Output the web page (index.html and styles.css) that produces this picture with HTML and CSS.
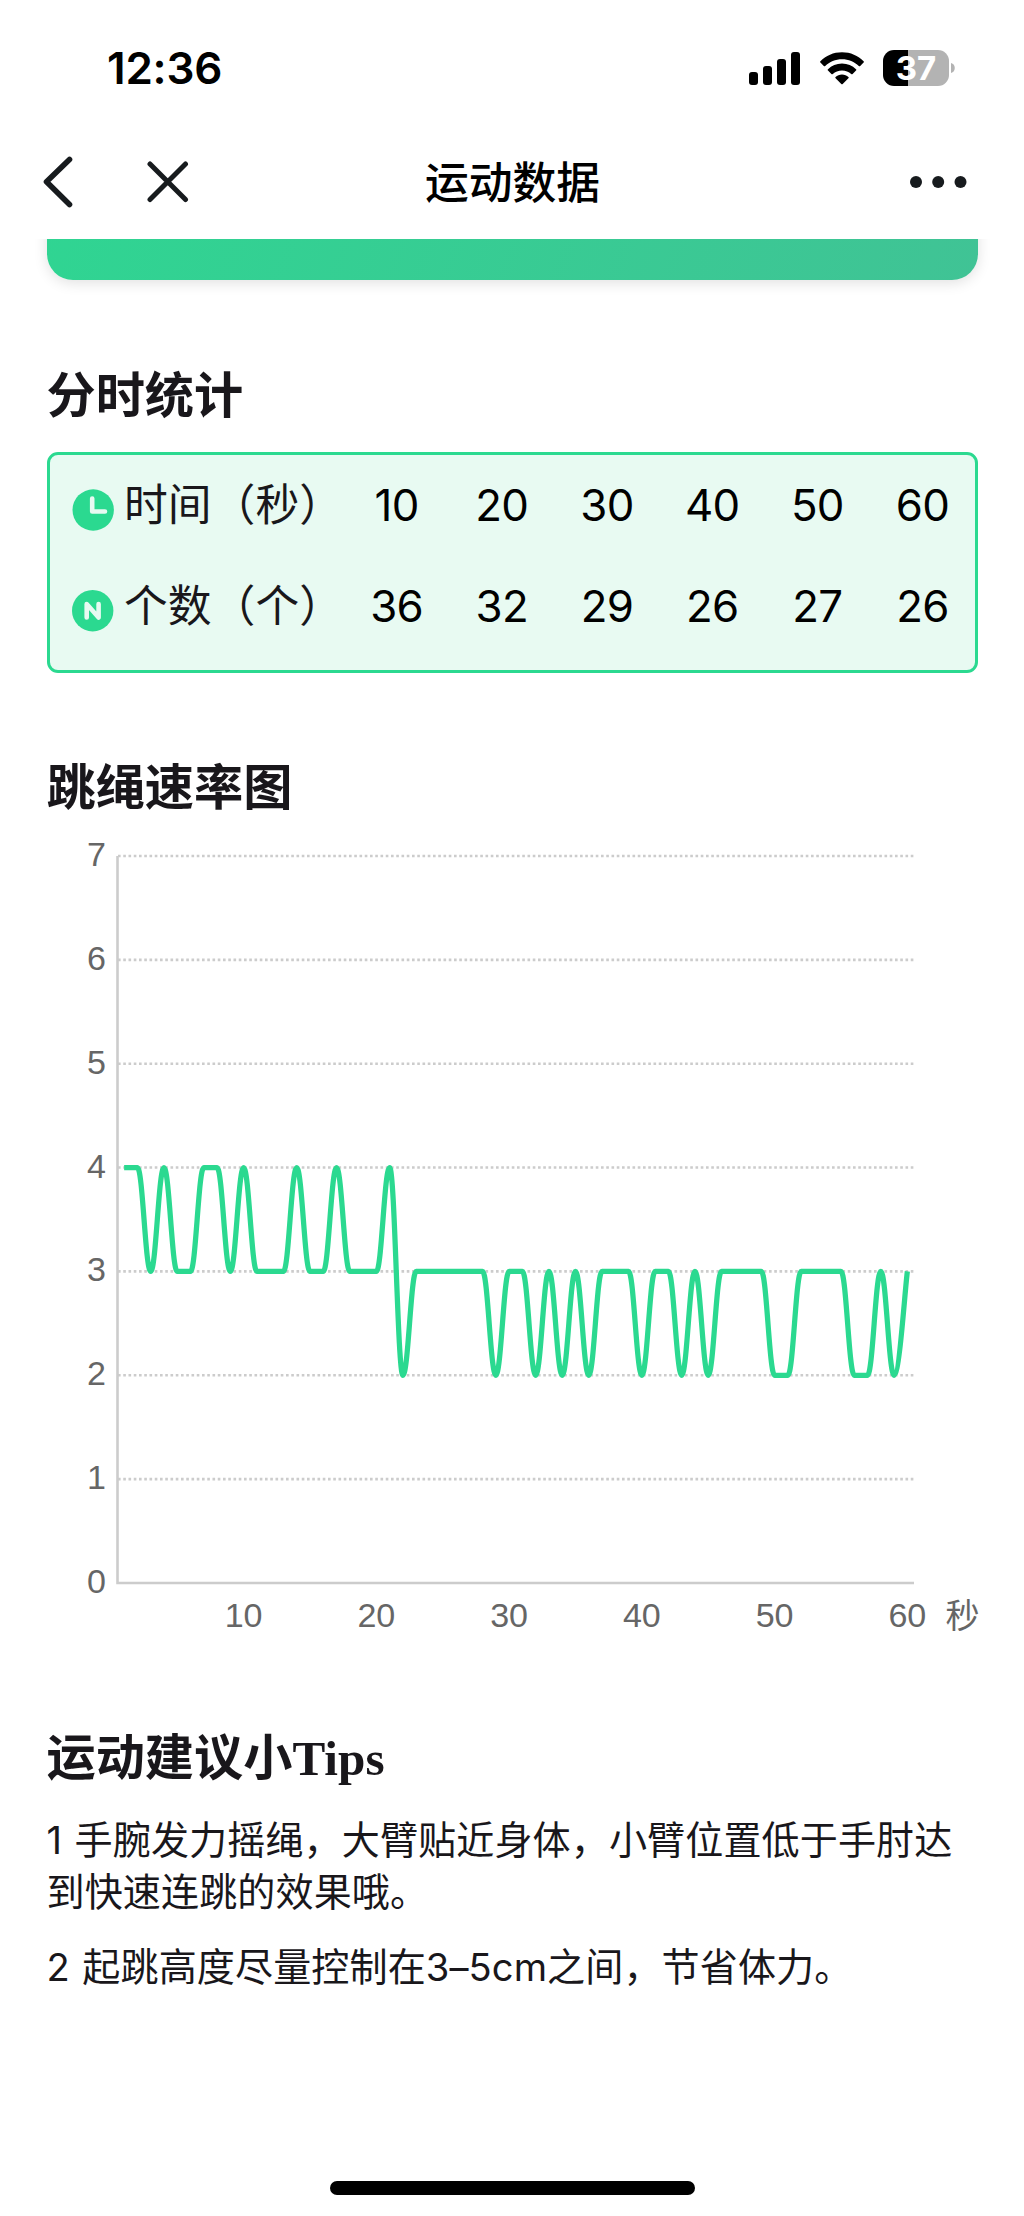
FILE: index.html
```html
<!DOCTYPE html>
<html lang="zh-CN">
<head>
<meta charset="utf-8">
<meta name="viewport" content="width=device-width, initial-scale=1">
<title>运动数据</title>
<link rel="stylesheet" href="styles.css">
</head>
<body>
<header class="top">
  <div class="status">
    <span class="clock">12:36</span>
    <div class="indicators">
      <svg class="signal" width="51" height="33" viewBox="0 0 51 33"><rect x="0" y="20" width="9" height="13" rx="3"/><rect x="14" y="14" width="9" height="19" rx="3"/><rect x="28" y="7" width="9" height="26" rx="3"/><rect x="42" y="0" width="9" height="33" rx="3"/></svg>
      <svg class="wifi" width="44" height="33" viewBox="0 0 44 33"><path d="M22 0.3C30.5 0.3 38.200 3.700 43.600 9.200Q44.200 9.900 43.600 10.600L40.200 13.900Q39.500 14.500 38.800 13.900C34.500 9.800 28.500 7.200 22 7.200S9.500 9.800 5.200 13.900Q4.500 14.500 3.800 13.900L0.400 10.600Q-0.200 9.900 0.400 9.200C5.800 3.700 13.500 0.300 22 0.300ZM22 11.500C27.500 11.500 32.400 13.700 36 17.200Q36.700 17.900 36 18.600L32.600 21.900Q31.900 22.500 31.200 21.900C28.800 19.700 25.600 18.400 22 18.400S15.200 19.700 12.800 21.900Q12.100 22.500 11.400 21.900L8 18.600Q7.300 17.900 8 17.200C11.600 13.700 16.500 11.500 22 11.500ZM22 22.500C24.600 22.500 26.700 23.400 28.400 24.900Q29.100 25.600 28.400 26.300L22.700 32Q22 32.700 21.300 32L15.600 26.300Q14.900 25.600 15.600 24.900C17.300 23.400 19.400 22.500 22 22.500Z"/></svg>
      <div class="power"><div class="battery">37</div><svg width="4" height="12" viewBox="0 0 4 12"><path d="M0 1C5 2 5 10 0 11Z" fill="#b3b3b3"/></svg></div>
    </div>
  </div>
  <nav class="nav">
    <div class="nav-left">
      <svg width="30" height="52" viewBox="0 0 30 52"><path d="M26.500 3.500L3.500 25.800L26.500 48.500"/></svg>
      <svg class="close" width="42" height="42" viewBox="0 0 42 42"><path d="M3 3L38.500 38.500M38.500 3L3 38.500"/></svg>
    </div>
    <h1>运动数据</h1>
    <svg class="more" width="58" height="14" viewBox="0 0 58 14"><circle cx="7" cy="7" r="6"/><circle cx="29.200" cy="7" r="6"/><circle cx="51.500" cy="7" r="6"/></svg>
  </nav>
</header>
<main>
  <div class="summary-clip"><div class="summary"></div></div>
  <section class="split">
    <h2>分时统计</h2>
    <div class="table">
      <div class="row">
        <svg class="badge" width="42" height="42" viewBox="0 0 42 42"><circle cx="21.200" cy="21" r="20.700"/><path d="M20.200 9.500V22.500H33" stroke-width="4.600"/></svg>
        <span class="label">时间（秒）</span>
        <span>10</span><span>20</span><span>30</span><span>40</span><span>50</span><span>60</span>
      </div>
      <div class="row">
        <svg class="badge" width="42" height="42" viewBox="0 0 42 42"><circle cx="20.700" cy="20.700" r="20.700"/><path d="M14.700 27.500V14L26.600 27.500V14" stroke-width="4.600"/></svg>
        <span class="label">个数（个）</span>
        <span>36</span><span>32</span><span>29</span><span>26</span><span>27</span><span>26</span>
      </div>
    </div>
  </section>
  <section class="rate">
    <h2>跳绳速率图</h2>
    <svg id="chart" width="932" height="820" viewBox="46 830 932 820"></svg>
  </section>
  <section class="tips">
    <h2>运动建议小Tips</h2>
    <p>1 手腕发力摇绳，大臂贴近身体，小臂位置低于手肘达到快速连跳的效果哦。</p>
    <p>2 起跳高度尽量控制在3–5cm之间，节省体力。</p>
  </section>
</main>
<footer><div class="home"></div></footer>
<script src="chart.js"></script>
</body>
</html>
```
FILE: styles.css
```css
* { box-sizing: border-box; margin: 0; padding: 0; }
body {
  display: flex;
  flex-direction: column;
  width: 1024px;
  height: 2216px;
  overflow: hidden;
  background: #fff;
  color: #19171b;
  font-family: Inter, "Noto Sans CJK SC", sans-serif;
}
svg { display: block; flex: none; }
.top { height: 239px; color: #000; }
.status {
  display: flex;
  justify-content: space-between;
  align-items: center;
  height: 136px;
  padding: 0 69px 0 107px;
}
.clock { font-size: 44px; font-weight: 600; line-height: 60px; letter-spacing: -0.2px; }
.indicators { display: flex; align-items: center; }
.wifi { margin-left: 20px; }
.power { display: flex; align-items: center; gap: 2px; margin-left: 19px; }
.battery {
  width: 66px;
  height: 36px;
  border-radius: 11px;
  background: linear-gradient(90deg, #000 25px, #b3b3b3 25px);
  color: #fff;
  font-size: 33px;
  font-weight: 700;
  line-height: 36px;
  text-align: center;
}
.nav {
  display: grid;
  grid-template-columns: 1fr auto 1fr;
  align-items: center;
  height: 92px;
  padding: 0 57px 0 43px;
}
.nav-left { display: flex; align-items: center; gap: 74px; margin-right: -14px; }
.nav-left path { fill: none; stroke: #171b1e; stroke-width: 5.600; stroke-linecap: round; stroke-linejoin: round; }
.nav-left .close path { stroke-width: 5; }
.nav h1 { padding: 3px 0 0 15px; font-size: 43.800px; font-weight: 500; line-height: 60px; }
.more { justify-self: end; fill: #171b1e; }
main { padding: 0 46px 0 46.500px; }
.summary-clip { height: 70px; margin: 0 -46px; padding: 0 46px; overflow: hidden; }
.summary {
  height: 141px;
  margin-top: -100px;
  border-radius: 26px;
  background: linear-gradient(110deg, #2fd592, #40c395);
  box-shadow: 0 3px 14px rgba(0, 0, 0, 0.12);
}
h2 {
  padding-top: 2px;
  font-family: "Liberation Serif", "Noto Sans CJK SC", serif;
  font-size: 49.200px;
  font-weight: 700;
  line-height: 60px;
}
.split { padding-top: 56px; }
.table {
  display: flex;
  flex-direction: column;
  gap: 38.600px;
  height: 221px;
  margin-top: 25px;
  padding: 20.400px 0 0 22.500px;
  border: 3px solid #2bd990;
  border-radius: 11px;
  background: #e8faf2;
}
.row {
  display: grid;
  grid-template-columns: 42px 230px repeat(6, 105.200px);
  height: 62px;
  color: #000;
  font-size: 43.800px;
  letter-spacing: -0.700px;
  line-height: 62px;
  text-align: center;
}
.row .label { padding-left: 10px; color: #19171b; text-align: left; letter-spacing: 0; white-space: nowrap; }
.badge { margin-top: 14px; fill: #2bd990; }
.badge path { fill: none; stroke: #e8faf2; stroke-linecap: round; stroke-linejoin: round; }
.rate { padding-top: 84px; }
#chart { margin-top: 11px; overflow: visible; }
.grid { stroke: #ccc; stroke-width: 2.600; stroke-dasharray: 2.625; }
.axis { fill: none; stroke: #ccc; stroke-width: 2.600; }
.series { fill: none; stroke: #2bd990; stroke-width: 5.250; stroke-linejoin: round; }
.tick { fill: #666; font: 34.100px "Liberation Sans", "Noto Sans CJK SC", sans-serif; text-anchor: middle; }
.tips { padding-top: 77.400px; }
.tips p { font-size: 38.100px; line-height: 52.500px; letter-spacing: 0.090px; word-spacing: 1.700px; }
.tips h2 + p { margin: 24.600px 0 21.600px; }
footer { display: flex; justify-content: center; margin-top: auto; padding-bottom: 21px; }
.home { width: 365px; height: 14px; border-radius: 7px; background: #000; }
```
FILE: chart.js
```js
const rates = [
  4, 4, 3, 4, 3, 3, 4, 4, 3, 4,
  3, 3, 3, 4, 3, 3, 4, 3, 3, 3,
  4, 2, 3, 3, 3, 3, 3, 3, 2, 3,
  3, 2, 3, 2, 3, 2, 3, 3, 3, 2,
  3, 3, 2, 3, 2, 3, 3, 3, 3, 2,
  2, 3, 3, 3, 3, 2, 2, 3, 2, 3
];
const left = 116.5, right = 913, bottom = 1583, unit = 103.86;
const step = (right - left) / rates.length;
const points = rates.map((v, i) => [left + step * (i + 0.5), bottom - v * unit]);
const chart = document.getElementById("chart");

function add(tag, cls, attrs, text) {
  const el = document.createElementNS("http://www.w3.org/2000/svg", tag);
  el.setAttribute("class", cls);
  for (const k in attrs) el.setAttribute(k, attrs[k]);
  if (text !== undefined) el.textContent = text;
  chart.appendChild(el);
}

for (let v = 0; v <= 7; v++) {
  const y = bottom - v * unit;
  if (v) add("line", "grid", { x1: left + 0.5, x2: right, y1: y, y2: y });
  add("text", "tick", { x: 95.5, y: y + 10 }, v);
}
add("path", "axis", { d: `M${left} ${bottom - 7 * unit}V${bottom}H${right}` });
for (let s = 10; s <= 60; s += 10) {
  add("text", "tick", { x: points[s - 1][0], y: 1627 }, s);
}
add("text", "tick", { x: 961.5, y: 1628 }, "秒");

// Smooth curve; turning points and plateaus keep a horizontal tangent.
const tension = 0.2;
function slope(i) {
  const a = points[i - 1], b = points[i], c = points[i + 1];
  if (!a) return [c[0] - b[0], c[1] - b[1]];
  if (!c) return [b[0] - a[0], b[1] - a[1]];
  const flat = b[1] >= Math.max(a[1], c[1]) || b[1] <= Math.min(a[1], c[1]);
  return [c[0] - a[0], flat ? 0 : c[1] - a[1]];
}
let d = "M" + points[0];
for (let i = 1; i < points.length; i++) {
  const p = points[i - 1], q = points[i], s = slope(i - 1), t = slope(i);
  d += `C${p[0] + s[0] * tension} ${p[1] + s[1] * tension} ${q[0] - t[0] * tension} ${q[1] - t[1] * tension} ${q[0]} ${q[1]}`;
}
add("path", "series", { d });
```
